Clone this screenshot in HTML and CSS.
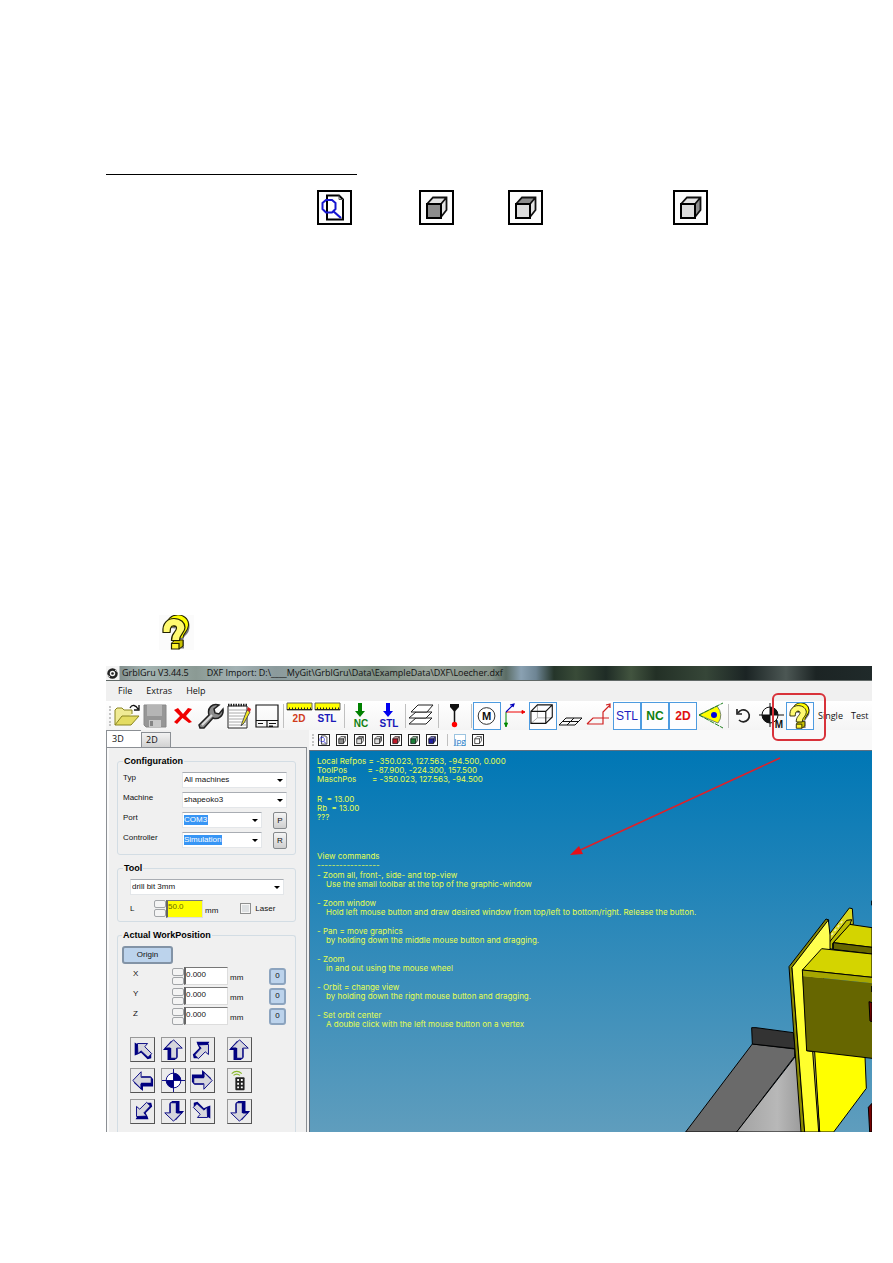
FILE: index.html
```html
<!DOCTYPE html>
<html lang="en">
<head>
<meta charset="utf-8">
<title>GrblGru manual</title>
<link rel="stylesheet" href="styles.css">
</head>
<body>
<svg class="defs" aria-hidden="true">
  <symbol id="cube" viewBox="0 0 35 35">
    <path class="face-top" d="M7.500 14L14.500 7H28L22 14Z"/>
    <path class="face-right" d="M22 14L28 7V20L22 27Z"/>
    <path class="face-front" d="M8 14H22V28H8Z"/>
    <path d="M8 14L14 7.500H27.500V20L22 27M22 14L27 8" fill="none" stroke="#111" stroke-width="1.800"/>
    <path d="M8 14H22V28H8Z" fill="none" stroke="#000" stroke-width="2"/>
  </symbol>
  <symbol id="find" viewBox="0 0 35 35">
    <path d="M10 5.500H22L26 9.500V29.500H10Z" fill="#fff" stroke="#000" stroke-width="2"/>
    <path d="M22 5.500V9.500H26" fill="none" stroke="#555"/>
    <path d="M9 10H15L18.500 13V19L15 22.500H9L5.500 19V13Z" fill="none" stroke="#1515d0" stroke-width="2"/>
    <path d="M16 21L24 28" stroke="#1515d0" stroke-width="2.200"/>
  </symbol>
  <symbol id="help" viewBox="0 0 35 35">
    <path d="M12 13C13 3 27 3 26 12C26 18 20 17 20 24M18 29H25" fill="none" stroke="#77777f" stroke-width="9"/>
    <path d="M11 12C11 1 26 2 25.500 10C25 16 19.500 16 20 23" fill="none" stroke="#222200" stroke-width="9"/>
    <path d="M11 12C11 1 26 2 25.500 10C25 16 19.500 16 20 23" fill="none" stroke="#ffff00" stroke-width="7"/>
    <path d="M12.500 28L16 25H24V31L20 34Z" fill="#c8c000" stroke="#222200"/>
    <path d="M4 17.500C3 8 9 3.500 15 3.500C22 3.500 26 8 26 12.500C26 18 20.500 19 20.500 25.500H12.500C12 18 17.500 17 17.500 13C17.500 10.500 13 10 12 12.500C11 14 11.500 16 11 17.500Z" fill="#fffa70" stroke="#222200" stroke-width="1.200"/>
    <path d="M12.500 28.500H20V34H12.500Z" fill="#fff430" stroke="#222200" stroke-width="1.200"/>
  </symbol>
  <symbol id="arrow-up" viewBox="0 0 25 25">
    <path d="M10 3L1 13H6V24H14L17 21V12Z" fill="#000080"/>
    <path d="M12.500 2L3.500 11H9V22H16V11H22Z" fill="#d6d6dd" stroke="#000080"/>
    <path d="M9 11V22M3 11.500H9" stroke="#000080" stroke-width="2"/>
  </symbol>
  <symbol id="arrow-nw" viewBox="0 0 25 25">
    <path d="M4 5V19L7 18L11 16L18 23L22 22V18L11 9Z" fill="#000080"/>
    <path d="M7 6H18L15 9.500L22.500 17L18.500 21L11 14L7.500 17Z" fill="#d6d6dd" stroke="#000080"/>
  </symbol>
  <symbol id="target" viewBox="0 0 25 25">
    <circle cx="12.500" cy="12.500" r="8" fill="#fff" stroke="#000080"/>
    <path d="M12.500 4.500A8 8 0 0 1 20.500 12.500H12.500ZM12.500 20.500A8 8 0 0 1 4.500 12.500H12.500Z" fill="#000080"/>
    <path d="M12.500 0V25M0 12.500H25" stroke="#000080"/>
  </symbol>
</svg>

<main class="doc">
  <div class="heading-rule"></div>
  <div class="view-icons">
    <svg class="boxed"><use href="#find"/></svg>
    <svg class="boxed cube-front"><use href="#cube"/></svg>
    <svg class="boxed cube-top"><use href="#cube"/></svg>
    <svg class="boxed cube-side"><use href="#cube"/></svg>
  </div>
  <svg class="help-icon"><use href="#help"/></svg>

  <section class="window">
    <header class="titlebar">
      <svg class="logo" viewBox="0 0 13 13"><circle cx="6.500" cy="6.500" r="4" fill="none" stroke="#222" stroke-width="2.500"/><circle cx="6.500" cy="6.500" r="1.300" fill="#222"/><path d="M1 8L4 10M9 3L12 5" stroke="#eee"/></svg>
      <span class="app-name">GrblGru V3.44.5</span>
      <span>DXF Import: D:\____MyGit\GrblGru\Data\ExampleData\DXF\Loecher.dxf</span>
    </header>
    <nav class="menu">
      <button>File</button><button>Extras</button><button>Help</button>
    </nav>

    <div class="toolbar">
      <span class="grip"></span>
      <button aria-label="Open"><svg viewBox="0 0 28 28"><path d="M3 23V8L5 6H10L12 8H20V12" fill="#f0eb95" stroke="#8a8520"/><path d="M3 23L10 14H27L19 23Z" fill="#e4dc62" stroke="#8a8520"/><path d="M18 6C20 2 24 3 26 7M27 3V8H22" fill="none" stroke="#111" stroke-width="1.300"/></svg></button>
      <button aria-label="Save"><svg viewBox="0 0 28 28"><path d="M4 3H26V25H6L4 23Z" fill="#969696" stroke="#888"/><path d="M7 3H22V14H7Z" fill="#b5b5b5"/><path d="M9 18H21V25H9Z" fill="#c8c8c8"/><path d="M10 19H13V24H10Z" fill="#858585"/></svg></button>
      <button aria-label="Delete"><svg viewBox="0 0 28 28"><path d="M6 8L10 6L15 12L20 6L24 7L18 14L24 20L21 21L14.500 16L9 22L6 20L12 14Z" fill="#f00000"/></svg></button>
      <button aria-label="Settings"><svg viewBox="0 0 28 28"><path d="M3 23L13 13C11 6 16 1 23 3L18 7L19 11L23 12L27 7C28 14 22 18 17 16L8 26H4Z" fill="#8c8c8c" stroke="#222" stroke-width="1.500"/><path d="M6 23L16 13" stroke="#ddd" stroke-width="2"/></svg></button>
      <button aria-label="Edit"><svg viewBox="0 0 28 28"><path d="M4 4H23V26H4Z" fill="#fff" stroke="#222"/><path d="M5 8H22M5 11H22M5 14H22M5 17H22M5 20H22M5 23H22" stroke="#aaa"/><path d="M4 3H24" stroke="#222" stroke-width="2.500" stroke-dasharray="1.500 1"/><path d="M18 21L23 8L26 10L20 21L17 24Z" fill="#f2e820" stroke="#555"/><path d="M23 8L24 5L27 7L26 10Z" fill="#d02020"/></svg></button>
      <button aria-label="Layout"><svg viewBox="0 0 28 28"><path d="M4 3H26V25H4ZM4 18.500H26M15 18.500V25M6 21.500H11M17 21.500H24M17 24H21" fill="none" stroke="#111" stroke-width="1.200"/></svg></button>
      <span class="sep"></span>
      <button aria-label="2D size"><svg viewBox="0 0 28 28"><path d="M2 1H27V8H2Z" fill="#ffff00" stroke="#665"/><path d="M4 6.500H26" stroke="#222" stroke-width="2" stroke-dasharray="1 2"/><path d="M2 7.500H27" stroke="#222"/><text x="14" y="20" fill="#d03c1c">2D</text></svg></button>
      <button aria-label="STL size"><svg viewBox="0 0 28 28"><path d="M2 1H27V8H2Z" fill="#ffff00" stroke="#665"/><path d="M4 6.500H26" stroke="#222" stroke-width="2" stroke-dasharray="1 2"/><path d="M2 7.500H27" stroke="#222"/><text x="14" y="20" fill="#1818b8">STL</text></svg></button>
      <span class="sep"></span>
      <button aria-label="Load NC"><svg viewBox="0 0 28 28"><path d="M12 1H16V9H19L14 15L9 9H12Z" fill="#008000"/><text x="15" y="25" fill="#108010">NC</text></svg></button>
      <button aria-label="Load STL"><svg viewBox="0 0 28 28"><path d="M12 1H16V9H19L14 15L9 9H12Z" fill="#0000f0"/><text x="15" y="25" fill="#1818b8">STL</text></svg></button>
      <span class="sep"></span>
      <button aria-label="Layers"><svg viewBox="0 0 28 28"><g fill="#fff" stroke="#222"><path d="M2 22L9 16H25L19 22Z"/><path d="M2 16L9 10H25L19 16Z"/><path d="M4 10L11 3H26L20 10Z"/></g></svg></button>
      <span class="sep"></span>
      <button aria-label="Probe"><svg viewBox="0 0 28 28"><path d="M10 2H19V5L14.500 10L10 5Z" fill="#111"/><path d="M14.500 8V22" stroke="#111" stroke-width="1.500"/><circle cx="14.500" cy="22.500" r="2.700" fill="#f00"/></svg></button>
      <span class="sep"></span>
      <button class="on" aria-label="Machine"><svg viewBox="0 0 28 28"><circle cx="13.500" cy="14" r="9" fill="#fff" stroke="#222"/><text class="mid" x="13.500" y="18" fill="#111">M</text></svg></button>
      <button aria-label="Axes"><svg viewBox="0 0 28 28"><path d="M5 10V24M3.500 21L5 25L6.500 21Z" fill="#080" stroke="#080"/><path d="M5 10H22M21 8.500L24 10L21 11.500Z" fill="#e00" stroke="#e00"/><path d="M5 10L13 2M9 3L13 2L12 5" fill="none" stroke="#00b" stroke-width="1.200"/></svg></button>
      <button class="on" aria-label="Box"><svg viewBox="0 0 28 28"><path d="M8 16V2M8 16H24M8 16L1 22" stroke="#aaa"/><path d="M1 9H17V22H1ZM1 9L8 2H24V15L17 22M17 9L24 2" fill="none" stroke="#111" stroke-width="1.200"/></svg></button>
      <button aria-label="Grid"><svg viewBox="0 0 28 28"><path d="M2 23L9 16H25L18 23ZM5.500 19.500H21.500M17 16L10 23" fill="none" stroke="#111"/></svg></button>
      <button aria-label="Offset"><svg viewBox="0 0 28 28"><path d="M2 22L8 16H24M2 22H18V10L25 3M21 3L25 2L25 6" fill="none" stroke="#d02020" stroke-width="1.200"/></svg></button>
      <button class="on" aria-label="STL view"><svg viewBox="0 0 28 28"><text class="thin" x="14" y="18" fill="#2020c0">STL</text></svg></button>
      <button class="on" aria-label="NC view"><svg viewBox="0 0 28 28"><text class="big" x="14" y="18" fill="#108010">NC</text></svg></button>
      <button class="on" aria-label="2D view"><svg viewBox="0 0 28 28"><text class="big" x="14" y="18" fill="#e01010">2D</text></svg></button>
      <button aria-label="Eye"><svg viewBox="0 0 28 28"><path d="M2 13L20 4Q27 13 21 21Z" fill="#ffff00" stroke="#786"/><path d="M2 13L26 1M2 13L26 26" stroke="#208020" stroke-dasharray="5 1"/><circle cx="17" cy="13" r="3" fill="#0000e0"/></svg></button>
      <span class="sep"></span>
      <button aria-label="Rotate"><svg viewBox="0 0 28 28"><path d="M8 11A6 6 0 1 1 9 18" fill="none" stroke="#222" stroke-width="1.700"/><path d="M7 7V12H12" fill="none" stroke="#222" stroke-width="1.700"/></svg></button>
      <button aria-label="Machine zero"><svg viewBox="0 0 28 28"><circle cx="12" cy="13" r="8" fill="#fff" stroke="#111"/><path d="M12 5A8 8 0 0 1 20 13H12ZM12 21A8 8 0 0 1 4 13H12Z" fill="#111"/><path d="M12 1V25M1 13H26" stroke="#111"/><text x="21" y="26" fill="#111">M</text></svg></button>
      <button class="on" aria-label="Help"><svg viewBox="0 0 28 28"><use href="#help" x="0" y="0" width="28" height="28"/></svg></button>
      <button class="word">Single</button>
      <button class="word">Test</button>
    </div>

    <div class="workspace">
      <aside class="sidebar">
        <div class="tabs"><button class="tab active">3D</button><button class="tab">2D</button></div>
        <form class="panel">
          <fieldset>
            <legend>Configuration</legend>
            <div class="config">
              <label for="typ">Typ</label>
              <span class="pick wide"><select id="typ"><option>All machines</option></select></span>
              <label for="machine">Machine</label>
              <span class="pick wide"><select id="machine"><option>shapeoko3</option></select></span>
              <label for="port">Port</label>
              <span class="pick"><select id="port" class="marked port"><option>COM3</option></select></span>
              <button type="button" class="letter">P</button>
              <label for="controller">Controller</label>
              <span class="pick"><select id="controller" class="marked sim"><option>Simulation</option></select></span>
              <button type="button" class="letter">R</button>
            </div>
          </fieldset>
          <fieldset class="tool-group">
            <legend>Tool</legend>
            <div class="tool">
              <span class="pick"><select aria-label="Tool"><option>drill bit 3mm</option></select></span>
              <div class="tool-row">
                <label for="len">L</label>
                <span class="spin"><button type="button" aria-label="Up"></button><button type="button" aria-label="Down"></button></span>
                <input id="len" class="num yellow" value="50.0">
                <span class="unit">mm</span>
                <input id="laser" type="checkbox"><label for="laser">Laser</label>
              </div>
            </div>
          </fieldset>
          <fieldset class="last">
            <legend>Actual WorkPosition</legend>
            <button type="button" class="origin">Origin</button>
            <div class="axes">
              <div class="axis"><label for="x">X</label><span class="spin"><button type="button" aria-label="Up"></button><button type="button" aria-label="Down"></button></span><input id="x" class="num" value="0.000"><span class="unit">mm</span><button type="button" class="zero">0</button></div>
              <div class="axis"><label for="y">Y</label><span class="spin"><button type="button" aria-label="Up"></button><button type="button" aria-label="Down"></button></span><input id="y" class="num" value="0.000"><span class="unit">mm</span><button type="button" class="zero">0</button></div>
              <div class="axis"><label for="z">Z</label><span class="spin"><button type="button" aria-label="Up"></button><button type="button" aria-label="Down"></button></span><input id="z" class="num" value="0.000"><span class="unit">mm</span><button type="button" class="zero">0</button></div>
            </div>
            <div class="jog">
              <button type="button" aria-label="Back left"><svg><use href="#arrow-nw"/></svg></button>
              <button type="button" aria-label="Back"><svg><use href="#arrow-up"/></svg></button>
              <button type="button" aria-label="Back right"><svg class="r90"><use href="#arrow-nw"/></svg></button>
              <button type="button" aria-label="Up"><svg><use href="#arrow-up"/></svg></button>
              <button type="button" aria-label="Left"><svg class="r270"><use href="#arrow-up"/></svg></button>
              <button type="button" aria-label="Centre"><svg><use href="#target"/></svg></button>
              <button type="button" aria-label="Right"><svg class="r90"><use href="#arrow-up"/></svg></button>
              <button type="button" aria-label="Remote"><svg viewBox="0 0 25 25"><path d="M4 5Q9.500 0 15 5M6 7Q9.500 4 13 7" fill="none" stroke="#8ab82c" stroke-width="1.200"/><rect x="8" y="9" width="10" height="14" rx="1" fill="#222"/><path d="M10 11H12V13H10ZM14 11H16V13H14ZM10 15H12V17H10ZM14 15H16V17H14ZM10 19H12V21H10ZM14 19H16V21H14Z" fill="#fff"/></svg></button>
              <button type="button" aria-label="Front left"><svg class="r270"><use href="#arrow-nw"/></svg></button>
              <button type="button" aria-label="Front"><svg class="r180"><use href="#arrow-up"/></svg></button>
              <button type="button" aria-label="Front right"><svg class="r180"><use href="#arrow-nw"/></svg></button>
              <button type="button" aria-label="Down"><svg class="r180"><use href="#arrow-up"/></svg></button>
            </div>
          </fieldset>
        </form>
      </aside>

      <div class="graphic">
        <div class="viewbar">
          <span class="grip"></span>
          <button aria-label="Zoom all"><svg><use href="#find"/></svg></button>
          <button aria-label="Front" class="cube-front"><svg><use href="#cube"/></svg></button>
          <button aria-label="Top" class="cube-top"><svg><use href="#cube"/></svg></button>
          <button aria-label="Side" class="cube-side"><svg><use href="#cube"/></svg></button>
          <button aria-label="Red" class="cube-red"><svg><use href="#cube"/></svg></button>
          <button aria-label="Green" class="cube-green"><svg><use href="#cube"/></svg></button>
          <button aria-label="Blue" class="cube-blue"><svg><use href="#cube"/></svg></button>
          <span class="sep"></span>
          <button class="jpg">Jpg</button>
          <button aria-label="Wire" class="cube-white"><svg><use href="#cube"/></svg></button>
        </div>
        <div class="viewport">
          <svg class="scene" viewBox="0 0 606 756" aria-hidden="true">
            <defs><linearGradient id="bed" x1="0" x2="1"><stop offset="0" stop-color="#a2a2a2"/><stop offset=".6" stop-color="#b8b8b8"/><stop offset="1" stop-color="#989898"/></linearGradient>
            <linearGradient id="plate" x1="0" y1="0" x2="0" y2="1"><stop offset="0" stop-color="#ffff58"/><stop offset=".5" stop-color="#ffff30"/><stop offset="1" stop-color="#ffff28"/></linearGradient></defs>
            <g stroke="#000" stroke-width="3" stroke-linejoin="round">
              <path d="M247 492L374 507V529L200 756H47Z" fill="#6a6a6a"/>
              <path d="M378 527L200 756H404Z" fill="url(#bed)"/>
              <path d="M245 443H258L370 458L376 506L247 492Z" fill="#333"/>
              <path d="M430 510L585 530L589 625L491 756H449Z" fill="#ffff00"/>
              <path d="M480 160L538 84L547 86L550 133L538 133L490 190L466 205Z" fill="#d8d820"/>
              <path d="M490 188L538 133L606 143V202Z" fill="#d4d400"/>
              <path d="M490 188L606 202V222L490 208Z" fill="#666600"/>
              <path d="M466 202L530 121L545 119L540 133L488 190V208Z" fill="#bcbc00"/>
              <path d="M484 165L520 120" stroke="#eeeeb0" stroke-dasharray="8 7" stroke-width="5"/>
              <path d="M357 260L468 117L477 120L366 262L404 756H393Z" fill="#8a8a00"/>
              <path d="M366 262L475 120L480 165V205L410 512L430 515L449 756H404Z" fill="url(#plate)"/>
              <path d="M428 515L434 515L449 756H446Z" fill="#b0b050"/>
              <path d="M455 206L606 222V292L397 270Z" fill="#d4d400"/>
              <path d="M397 270L606 292V310L397 288Z" fill="#a6a600" stroke="none"/>
              <path d="M397 288L606 310V535L410 512Z" fill="#666600" stroke="none"/>
              <path d="M606 535L410 512L397 270L606 292" fill="none"/>
              <path d="M597 365L606 368V425L600 423Z" fill="#780000"/>
              <path d="M595 682L606 670V756H599Z" fill="#780000"/>
              <path d="M605 62V76M605 318V336"/>
            </g>
          </svg>
          <pre>Local Refpos = -350.023, 127.563, -94.500, 0.000
ToolPos         = -87.900, -224.300, 157.500
MaschPos       = -350.023, 127.563, -94.500</pre>
          <pre class="radii">R  = 13.00
Rb  = 13.00
???</pre>
          <pre class="commands-title">View commands
-----------------</pre>
          <div class="commands">
            <p>- Zoom all, front-, side- and top-view<span>Use the small toolbar at the top of the graphic-window</span></p>
            <p>- Zoom window<span>Hold left mouse button and draw desired window from top/left to bottom/right. Release the button.</span></p>
            <p>- Pan = move graphics<span>by holding down the middle mouse button and dragging.</span></p>
            <p>- Zoom<span>in and out using the mouse wheel</span></p>
            <p>- Orbit = change view<span>by holding down the right mouse button and dragging.</span></p>
            <p>- Set orbit center<span>A double click with the left mouse button on a vertex</span></p>
          </div>
        </div>
      </div>
    </div>

    <svg class="callout" viewBox="0 0 260 170" aria-hidden="true">
      <rect x="207" y="1" width="52" height="46" rx="5" fill="none" stroke="#d8323a" stroke-width="2"/>
      <path d="M214 65L10 159" stroke="#e02028" stroke-width="1.500"/>
      <path d="M4 162L13 153L17 161Z" fill="#e81018"/>
    </svg>
  </section>
</main>
</body>
</html>
```
FILE: styles.css
```css
* { box-sizing: border-box; }
body { margin: 0; background: #fff; color: #111; font: 9px/12px "Open Sans", "Noto Sans", sans-serif; }
button, input, select { font: inherit; color: inherit; margin: 0; padding: 0; }
button { border: 0; background: none; }
svg { display: block; }
.defs { position: absolute; width: 0; height: 0; }

.doc { padding: 174px 21px 131px 106px; }
.heading-rule { width: 251px; border-top: 1px solid #000; }
.view-icons { display: grid; grid-template-columns: 102px 89px 165px 35px; padding: 15px 0 0 211px; }
.boxed { width: 35px; height: 35px; background: #fdfdfd; box-shadow: inset 0 0 0 2px #000; }
.help-icon { width: 35px; height: 35px; margin: 390px 0 16px 53px; background: #fbfbfb; }

.face-front { fill: var(--front, #dcdcdc); }
.face-top { fill: var(--top, #e4e4e4); }
.face-right { fill: var(--right, #e4e4e4); }
.cube-front { --front: #8c8c8c; }
.cube-top { --top: #8c8c8c; }
.cube-side { --right: #8c8c8c; }
.cube-red { --front: #c01828; --top: #c8a0a0; --right: #c8a0a0; }
.cube-green { --front: #188038; --top: #a0c8a8; --right: #a0c8a8; }
.cube-blue { --front: #2020a0; --top: #8080d0; --right: #4040b0; }
.cube-white { --front: #fff; --top: #fff; --right: #fff; }

.window { position: relative; background: #f0f0f0; }
.titlebar { display: flex; align-items: center; height: 15px; white-space: nowrap; overflow: hidden; border-bottom: 1px solid #606866;
  background: linear-gradient(90deg, #f4f4f4 0, #f4f4f4 13px, #84918f 14px, #a5b5b3 40px, #8b9a94 90px, #a3b2b4 130px, #8b9a9c 170px, #98a8a2 220px, #7f9084 270px, #9ba59c 320px, #87948a 385px, #5b6d66 400px, #8aa1b2 415px, #6e8594 430px, #25352a 448px, #394b38 470px, #1f2c26 500px, #42543f 525px, #233026 550px, #364638 600px, #1b2424 640px, #4c5754 680px, #1c2424 710px, #202a2a 100%); }
.logo { width: 13px; height: 13px; margin-right: 3px; }
.app-name { margin-right: 18px; }
.menu { display: flex; gap: 14px; height: 20px; padding: 0 12px; align-items: center; }

.toolbar { display: flex; align-items: center; height: 29px; padding-left: 3px; background: linear-gradient(#fff, #f4f4f4); overflow: hidden; }
.toolbar button { flex: 0 0 28px; height: 28px; }
.toolbar svg { width: 28px; height: 28px; }
.toolbar button.on { border: 1px solid #4d9be0; background: #fdfdff; overflow: hidden; }
.toolbar .on svg { width: 26px; height: 26px; }
.toolbar button.word { flex-basis: auto; padding: 0 4px; }
.toolbar text { font: bold 10px "Liberation Sans", sans-serif; text-anchor: middle; }
.toolbar text.mid { font-size: 12px; }
.toolbar text.big { font-size: 13px; }
.toolbar text.thin { font-size: 13px; font-weight: normal; }
.grip { flex: 0 0 3px; height: 20px; border-left: 2px dotted #c4c4c4; }
.sep { flex: 0 0 5px; height: 24px; background: linear-gradient(90deg, transparent 3px, #c0c0c0 3px, #c0c0c0 4px, transparent 4px); }

.workspace { display: grid; grid-template-columns: 201px 1fr; column-gap: 2px; }
.sidebar { display: flex; flex-direction: column; font: 8px/12px "Liberation Sans", Arial, sans-serif; }
.tabs { display: flex; align-items: flex-end; height: 17px; }
.tab { width: 30px; height: 15px; padding-left: 4px; text-align: left; border: 1px solid #8b8f94; border-bottom: 0; background: linear-gradient(#f2f2f2, #d2d2d2); font: 9px/12px "Open Sans", sans-serif; }
.tab.active { width: 35px; height: 17px; background: #fff; border-right: 0; padding-left: 5px; }
.panel { flex: 1; display: flex; flex-direction: column; gap: 7px; padding: 7px 10px 0 10px; border: 1px solid #8b8f94; border-width: 1px 1px 0; box-shadow: inset 2px 0 #fafafa; }
fieldset { min-width: 0; margin: 0; border: 1px solid #d3dde4; border-radius: 3px; padding: 5px 5px 6px; }
.tool-group { padding-bottom: 3px; }
.last { border-bottom: 0; border-radius: 3px 3px 0 0; padding: 5px 4px 8px; }
legend { margin: 0; padding: 0 1px; font-weight: bold; font-size: 9px; line-height: 12px; color: #000; }
.config { display: grid; grid-template-columns: 59px 80px 11px 14px; row-gap: 4px; grid-auto-rows: 16px; }
.config label { grid-column: 1; }
.config .wide { grid-column: 2 / 5; }
.letter { grid-column: 4; height: 17px; border: 1px solid #85898c; border-radius: 2px; background: linear-gradient(#f4f4f4, #cfcfcf); }
.pick { position: relative; display: block; height: 16px; border: 1px solid #e3e6e9; border-top-color: #a9adb3; background: #fff; }
.pick select { display: block; width: 100%; height: 14px; padding-left: 1px; border: 0; appearance: none; background: none; }
.pick::after { content: ""; position: absolute; right: 3px; top: 6px; border: 3px solid transparent; border-top-color: #000; border-bottom: 0; pointer-events: none; }
.pick select.marked { color: #fff; background: linear-gradient(#3795f5, #3795f5) 1px 2px / 24px 10px no-repeat; }
.pick select.sim { background-size: 38px 10px; }

.tool { padding: 0 6px 0 7px; }
.tool-row { display: flex; align-items: center; height: 19px; margin-top: 4px; }
.tool-row label:first-child { width: 24px; }
.spin { display: flex; flex-direction: column; gap: 1px; width: 12px; }
.spin button { height: 8px; border: 1px solid #a2a5a8; border-radius: 2px; background: #f4f4f4; }
.num { width: 44px; height: 18px; padding-bottom: 4px; border: 1px solid #ddd; border-top-color: #777; border-left: 2px solid #666; background: #fff; }
.num.yellow { width: 37px; background: #ffff00; color: #6b6b00; }
.unit { padding: 4px 0 0 2px; }
.tool-row input[type="checkbox"] { appearance: none; width: 11px; height: 11px; margin: 0 4px 0 22px; border: 1px solid #8e8f8f; background: #dde0e2; box-shadow: inset 0 0 0 1px #f6f6f6; }
.origin { display: block; width: 51px; height: 18px; border: 2px solid #8293a6; border-radius: 3px; background: #bcd3ec; }
.axes { display: grid; gap: 2px; margin-top: 3px; }
.axis { display: flex; align-items: center; height: 18px; padding: 0 5px 0 11px; }
.axis label { width: 39px; height: 16px; }
.zero { width: 17px; height: 17px; margin-left: auto; border: 2px solid #8ca4bf; border-radius: 3px; background: #bcd3ec; }
.jog { display: grid; grid-template-columns: 31px 29px 37px 25px; grid-auto-rows: 25px; row-gap: 6px; margin-top: 12px; padding-left: 8px; }
.jog button { width: 25px; height: 25px; border: 1px solid #777; border-color: #999 #555 #555 #999; background: #ececec; }
.jog svg { width: 23px; height: 23px; }
.r90 { transform: rotate(90deg); }
.r180 { transform: rotate(180deg); }
.r270 { transform: rotate(270deg); }

.graphic { display: flex; flex-direction: column; min-width: 0; }
.viewbar { display: flex; align-items: center; gap: 6px; height: 20px; padding-left: 3px; background: #f9f9f9; }
.viewbar .grip { height: 12px; flex-basis: 0; margin-right: -2px; }
.viewbar button { width: 12px; height: 12px; background: #fff; box-shadow: inset 0 0 0 1px #222; }
.viewbar button svg { width: 12px; height: 12px; }
.viewbar .sep { height: 12px; flex-basis: 4px; }
.viewbar .jpg { box-shadow: inset 0 0 0 1px #9cc4e0; color: #1878c8; font-size: 8px; line-height: 11px; }
.viewport { flex: 1; position: relative; border-top: 1px solid #607080; border-left: 1px solid #607080; padding: 6px 7px; overflow: hidden; color: #e6ff50; font: 8px/9px Inter, "Open Sans", sans-serif; background: linear-gradient(#0077b5 0, #1c82b8 30%, #5f9dbd 100%); }
.viewport pre { position: relative; margin: 0 0 11px; font: inherit; }
.viewport pre.radii { margin-bottom: 30px; }
.viewport pre.commands-title { margin-bottom: 1px; }
.commands { position: relative; display: grid; gap: 10px; }
.commands p { margin: 0; }
.commands span { display: block; padding-left: 9px; }
.scene { position: absolute; right: 0; bottom: 0; width: 202px; height: 252px; }
.callout { position: absolute; right: 46px; top: 27px; width: 260px; height: 170px; pointer-events: none; }
```
